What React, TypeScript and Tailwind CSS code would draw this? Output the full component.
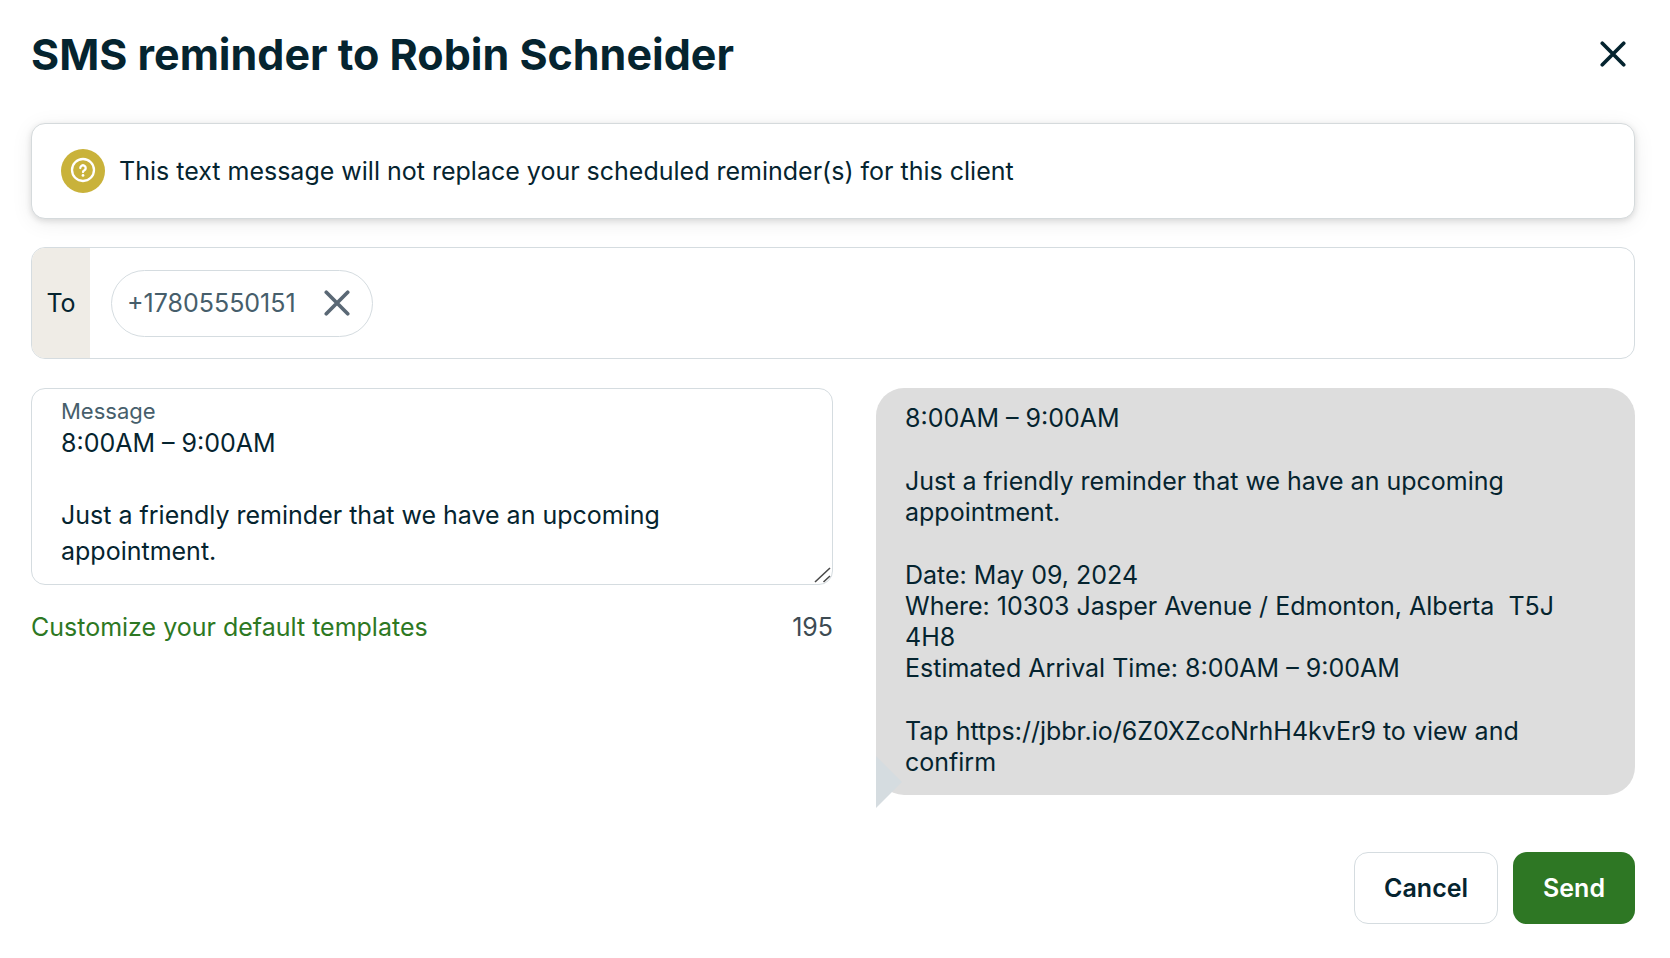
import { useState } from 'react';

const defaultMessage = [
  '8:00AM – 9:00AM',
  'Just a friendly reminder that we have an upcoming appointment.',
  'Date: May 09, 2024\nWhere: 10303 Jasper Avenue / Edmonton, Alberta  T5J 4H8\nEstimated Arrival Time: 8:00AM – 9:00AM',
  'Tap https://jbbr.io/6Z0XZcoNrhH4kvEr9 to view and confirm',
].join('\n\n');

function CrossIcon() {
  return (
    <svg width="26" height="26" viewBox="0 0 26 26" fill="none" stroke="currentColor" strokeWidth="3.7" strokeLinecap="round" aria-hidden="true">
      <path d="M2.300 2.300l21.400 21.400M23.700 2.300L2.300 23.700" />
    </svg>
  );
}

function QuestionIcon() {
  return (
    <svg width="26" height="26" viewBox="0 0 26 26" fill="none" stroke="currentColor" strokeWidth="2.3" strokeLinecap="round" strokeLinejoin="round" aria-hidden="true">
      <circle cx="13" cy="13" r="11" />
      <path d="M10.300 11a2.700 2.700 0 1 1 4.100 2.300c-.9.5-1.400 1-1.400 1.800" />
      <circle cx="13" cy="18.4" r="1.4" fill="currentColor" stroke="none" />
    </svg>
  );
}

function Notice() {
  return (
    <div className="flex h-24 items-center gap-3.5 rounded-[14px] border border-[#d5dadc] bg-white pl-[29px] shadow-[0_2px_6px_rgba(0,0,0,0.12),0_4px_22px_rgba(0,0,0,0.07)]">
      <span className="flex size-11 shrink-0 items-center justify-center rounded-full bg-[#c9b23a] pb-0.5 text-white">
        <QuestionIcon />
      </span>
      <p>This text message will not replace your scheduled reminder(s) for this client</p>
    </div>
  );
}

function Recipients() {
  return (
    <div className="mt-7 flex h-28 overflow-hidden rounded-[14px] border border-[#d5dce0]">
      <div className="flex w-[58px] shrink-0 items-center justify-center bg-[#efece6]">To</div>
      <div className="flex items-center pl-[21px]">
        <div className="flex h-[67px] items-center gap-7 rounded-full border border-[#d5dce0] pr-[22px] pl-[15px] text-[#465e6b]">
          <span>+17805550151</span>
          <button type="button" aria-label="Remove +17805550151" className="text-[#5a6875]">
            <CrossIcon />
          </button>
        </div>
      </div>
    </div>
  );
}

function Preview({ message }: { message: string }) {
  return (
    <div className="relative flex flex-1 flex-col gap-8 rounded-[28px] bg-[#dddddd] px-[29px] pt-[15px] pb-[17px] leading-[31px]">
      {message.split('\n\n').map((paragraph, index) => (
        <p key={index} className="whitespace-pre-wrap">
          {paragraph}
        </p>
      ))}
      <svg className="absolute -bottom-[13px] left-0" width="26" height="52" viewBox="0 0 26 52" fill="#d5dce0" aria-hidden="true">
        <path d="M0 0l26 26L0 52z" />
      </svg>
    </div>
  );
}

export default function App() {
  const [message, setMessage] = useState(defaultMessage);

  return (
    <main
      role="dialog"
      aria-labelledby="title"
      className="bg-white pt-[26px] pr-[35px] pb-8 pl-[31px] font-['Inter',sans-serif] text-[25px] leading-9 text-[#05242f]"
    >
      <header className="mb-[41px] flex items-center justify-between">
        <h1 id="title" className="text-[43px] leading-[56px] font-bold">
          SMS reminder to Robin Schneider
        </h1>
        <button type="button" aria-label="Close" className="flex size-11 items-center justify-center">
          <CrossIcon />
        </button>
      </header>

      <Notice />
      <Recipients />

      <div className="mt-[29px] flex items-start gap-[43px]">
        <div className="w-1/2 shrink-0">
          <div className="relative rounded-[14px] border border-[#d5dce0] px-[29px] pt-[9px]">
            <label htmlFor="message" className="block text-[22px] leading-[27px] text-[#465e6b]">
              Message
            </label>
            <textarea
              id="message"
              value={message}
              onChange={(event) => setMessage(event.target.value)}
              className="block h-[159px] w-full resize-none bg-transparent outline-none [scrollbar-width:none]"
            />
            <svg className="absolute right-px bottom-px" width="17" height="16" viewBox="0 0 17 16" stroke="#4a4a4a" strokeWidth="1.6" aria-hidden="true">
              <path d="M1 15L16 1M9.500 15L16 9" />
            </svg>
          </div>
          <div className="mt-6 flex justify-between">
            <a href="#templates" className="text-[#2d7823]">
              Customize your default templates
            </a>
            <span className="text-[#3d4b53]">195</span>
          </div>
        </div>
        <Preview message={message} />
      </div>

      <footer className="mt-[57px] flex justify-end gap-[15px] font-semibold">
        <button type="button" className="h-[72px] rounded-[14px] border border-[#d5dce0] px-[29px]">
          Cancel
        </button>
        <button type="button" className="h-[72px] rounded-[14px] bg-[#2e7724] px-[30px] text-white">
          Send
        </button>
      </footer>
    </main>
  );
}
